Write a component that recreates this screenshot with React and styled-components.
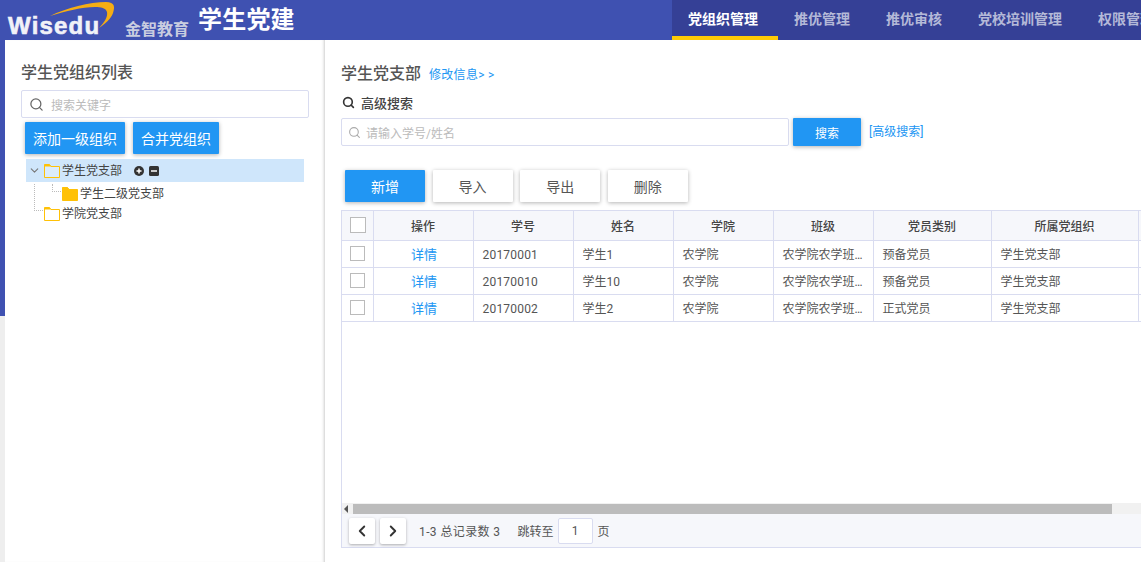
import React from 'react';
import styled, { createGlobalStyle } from 'styled-components';
import { Search, ChevronDown, ChevronLeft, ChevronRight } from 'lucide-react';

const GlobalStyle = createGlobalStyle`
    html, body {
        margin: 0;
        height: 100%;
        overflow: hidden;
        background: #fff;
    }
    body {
        font-family: Roboto, "Noto Sans CJK SC", sans-serif;
        font-size: 12px;
        color: #555;
    }
    * { box-sizing: border-box; }
`;

const Page = styled.div`
    width: 1141px;
    height: 562px;
    overflow: hidden;
    display: flex;
    flex-direction: column;
`;

const Header = styled.header`
    height: 40px;
    flex: none;
    display: flex;
    background: #3f51b1;
`;

const LogoBox = styled.div`
    position: relative;
    width: 125px;
    flex: none;
`;

const LogoText = styled.span`
    position: absolute;
    left: 8px;
    top: 11px;
    font-family: "Liberation Sans", sans-serif;
    font-weight: 700;
    font-size: 24px;
    line-height: 30px;
    letter-spacing: 1.2px;
    color: #f1f2f8;
    -webkit-text-stroke: 0.6px #f1f2f8;
`;

const Swoosh = styled.svg`
    position: absolute;
    left: 48px;
    top: 0;
`;

const SubBrand = styled.span`
    margin-top: 20px;
    font-size: 16px;
    line-height: 20px;
    font-weight: 700;
    color: #c9cde0;
    width: 73px;
    flex: none;
`;

const AppName = styled.h1`
    margin: 4px 0 0;
    font-size: 24px;
    line-height: 32px;
    font-weight: 700;
    color: #fff;
    letter-spacing: 0.2px;
`;

const Nav = styled.nav`
    margin-left: auto;
    width: 469px;
    flex: none;
    display: flex;
    overflow: hidden;
    background: #354096;
`;

const NavItem = styled.a`
    flex: none;
    height: 40px;
    padding: 11px 20px 0 16px;
    font-size: 14px;
    line-height: 17px;
    font-weight: 700;
    white-space: nowrap;
    color: ${props => props.active ? '#fff' : '#b4b9d8'};
    border-bottom: 4px solid ${props => props.active ? '#ffcb05' : 'transparent'};
`;

const Body = styled.div`
    flex: 1;
    display: flex;
    min-height: 0;
`;

const Strip = styled.div`
    width: 5px;
    flex: none;
    background: linear-gradient(#3f51b1 276px, #eee 276px);
`;

const Sidebar = styled.aside`
    width: 320px;
    flex: none;
    padding: 20px 0 0 16px;
    background: #fff;
    box-shadow: inset -3px 0 3px -2px #ccc;
`;

const SideTitle = styled.h2`
    margin: 0;
    font-size: 16px;
    line-height: 25px;
    font-weight: 500;
    color: #555;
`;

const SearchBox = styled.div`
    width: ${props => props.width}px;
    height: 28px;
    flex: none;
    display: flex;
    align-items: center;
    gap: ${props => props.gap}px;
    padding-left: ${props => props.inset}px;
    border: 1px solid #d9dcf0;
    border-radius: 2px;
    background: #fff;
    color: #bbb;
    font-size: 12px;
    svg { color: ${props => props.iconColor}; flex: none; }
`;

const SideSearch = styled(SearchBox)`
    margin-top: 5px;
`;

const ButtonRow = styled.div`
    display: flex;
    gap: 8px;
    margin: 4px 0 0 4px;
`;

const Button = styled.button`
    width: ${props => props.width}px;
    height: ${props => props.height}px;
    flex: none;
    padding: 0;
    border: 0;
    border-radius: 1px;
    font-family: inherit;
    font-size: ${props => props.size || 14}px;
    background: ${props => props.plain ? '#fff' : '#2196f3'};
    color: ${props => props.plain ? '#555' : '#fff'};
    box-shadow: 0 1px 4px rgba(0, 0, 0, 0.3);
`;

const Tree = styled.div`
    margin: 5px 0 0 5px;
    width: 278px;
    color: #444;
`;

const TreeRow = styled.div`
    position: relative;
    height: ${props => props.height}px;
    display: flex;
    align-items: center;
    padding-left: ${props => props.indent}px;
    background: ${props => props.selected ? '#cfe6fb' : 'transparent'};
    line-height: 16px;
`;

const Caret = styled(ChevronDown)`
    position: absolute;
    left: 2px;
    top: 5px;
    color: #777;
`;

const Branch = styled.span`
    position: absolute;
    left: ${props => props.left}px;
    top: ${props => props.top}px;
    width: ${props => props.width}px;
    height: ${props => props.height}px;
    border-left: 1px dotted #bbb;
    border-bottom: 1px dotted #bbb;
`;

const FolderSvg = styled.svg`
    flex: none;
    margin-right: 2px;
`;

const Actions = styled.span`
    display: flex;
    gap: 5px;
    margin-left: 12px;
`;

const Folder = ({ open }) => (
    <FolderSvg width="16" height="16" viewBox="0 0 16 16">
        <path
            d="M.5 1.5h5l1.5 2h8.500v11H.5z"
            fill={open === 'filled' ? '#ffc107' : open ? 'rgba(255,255,255,.25)' : '#fff'}
            stroke="#ffc107"
        />
        <path d="M.5 1.5h5l1.500 2H.5z" fill="#ffc107" />
    </FolderSvg>
);

const Main = styled.main`
    flex: 1;
    min-width: 0;
    padding: 19px 0 0 16px;
`;

const TitleRow = styled.div`
    display: flex;
    align-items: center;
    gap: 8px;
    height: 26px;
`;

const MainTitle = styled.h2`
    margin: 0;
    font-size: 16px;
    font-weight: 500;
    color: #555;
`;

const Link = styled.a`
    color: #2196f3;
    font-size: 12px;
    letter-spacing: ${props => props.spread || 0}px;
`;

const EditLink = styled(Link)`
    margin-top: 2px;
`;

const AdvancedLabel = styled.div`
    display: flex;
    align-items: center;
    gap: 6px;
    height: 20px;
    margin: 7px 0 6px 1px;
    font-size: 13px;
    font-weight: 500;
    color: #444;
    svg { color: #333; }
`;

const SearchRow = styled.div`
    display: flex;
    gap: 4px;
`;

const AdvancedLink = styled(Link)`
    margin: 4px 0 0 4px;
`;

const Toolbar = styled.div`
    display: flex;
    gap: 7.6px;
    margin: 24px 0 8px 4px;
`;

const TableBox = styled.div`
    width: 860px;
    height: 338px;
    display: flex;
    flex-direction: column;
    border: 1px solid #d9dcf0;
`;

const TableArea = styled.div`
    flex: 1;
    min-height: 0;
`;

const Table = styled.table`
    table-layout: fixed;
    width: 857px;
    border-collapse: collapse;
`;

const Th = styled.th`
    height: 29px;
    padding: 0;
    font-size: 12px;
    font-weight: 500;
    color: #444;
    background: #f6f7fb;
    border-right: 1px solid #d9dcf0;
    border-bottom: 1px solid #d9dcf0;
`;

const Td = styled.td`
    height: 27px;
    padding: ${props => props.numeric ? '3px' : '0'} 7px 0 9px;
    color: #555;
    white-space: nowrap;
    overflow: hidden;
    text-overflow: ellipsis;
    letter-spacing: ${props => props.numeric ? '0.2px' : '0'};
    text-align: ${props => props.center ? 'center' : 'left'};
    border-right: 1px solid #d9dcf0;
    border-bottom: 1px solid #d9dcf0;
`;

const CheckCell = styled(Td)`
    padding: 0 0 0 8px;
`;

const Check = styled.span`
    display: block;
    width: ${props => props.size}px;
    height: ${props => props.size}px;
    margin-left: ${props => props.inset || 0}px;
    border: 1px solid #bbb;
    background: #fff;
`;

const DetailLink = styled(Link)`
    font-size: 13px;
`;

const ScrollTrack = styled.div`
    height: 11px;
    flex: none;
    display: flex;
    align-items: center;
    background: #f1f1f1;
`;

const ScrollArrow = styled.span`
    width: 0;
    height: 0;
    margin: 0 5px 0 2px;
    border-style: solid;
    border-color: transparent #555 transparent transparent;
    border-width: 4px 4px 4px 0;
`;

const ScrollThumb = styled.span`
    width: 759px;
    height: 10px;
    background: #bcbcbc;
`;

const Pager = styled.div`
    height: 33px;
    flex: none;
    display: flex;
    align-items: center;
    padding-left: 7px;
    background: #f6f7fb;
    color: #555;
`;

const PageButton = styled.button`
    width: 26px;
    height: 26px;
    margin-right: 5px;
    padding: 0;
    display: flex;
    align-items: center;
    justify-content: center;
    border: 0;
    border-radius: 2px;
    background: #fff;
    color: #333;
    box-shadow: 0 1px 3px rgba(0, 0, 0, 0.3);
`;

const PagerText = styled.span`
    margin-left: ${props => props.gap}px;
    letter-spacing: ${props => props.spread || 0}px;
`;

const PageInput = styled.span`
    width: 35px;
    height: 26px;
    margin-left: 4px;
    display: flex;
    align-items: center;
    justify-content: center;
    border: 1px solid #d9dcf0;
    border-radius: 2px;
    background: #fff;
`;

const navItems = ['党组织管理', '推优管理', '推优审核', '党校培训管理', '权限管理'];
const columns = [
    ['操作', 100], ['学号', 100], ['姓名', 100], ['学院', 100],
    ['班级', 100], ['党员类别', 118], ['所属党组织', 147], ['', 61],
];
const rows = [
    ['20170001', '学生1', '预备党员'],
    ['20170010', '学生10', '预备党员'],
    ['20170002', '学生2', '正式党员'],
];

function App() {
    return (
        <Page>
            <GlobalStyle />
            <Header>
                <LogoBox>
                    <LogoText>Wisedu</LogoText>
                    <Swoosh width="70" height="32" viewBox="0 0 70 32">
                        <path d="M2 16C18 8 42 2 58 2c9 0 9 5 7 11-2 6-8 11-14 15 5-5 9-11 8-16-1-4-6-5-12-5C34 7 18 11 2 16z" fill="#f5ad14" />
                    </Swoosh>
                </LogoBox>
                <SubBrand>金智教育</SubBrand>
                <AppName>学生党建</AppName>
                <Nav>
                    {navItems.map((item, i) => (
                        <NavItem key={item} active={i === 0}>{item}</NavItem>
                    ))}
                </Nav>
            </Header>
            <Body>
                <Strip />
                <Sidebar>
                    <SideTitle>学生党组织列表</SideTitle>
                    <SideSearch width={288} inset={7} gap={7} iconColor="#666">
                        <Search size={15} />
                        <span>搜索关键字</span>
                    </SideSearch>
                    <ButtonRow>
                        <Button width={100} height={32}>添加一级组织</Button>
                        <Button width={86} height={32}>合并党组织</Button>
                    </ButtonRow>
                    <Tree>
                        <TreeRow selected height={23} indent={18}>
                            <Caret size={13} />
                            <Folder open />
                            <span>学生党支部</span>
                            <Actions>
                                <svg width="10" height="10" viewBox="0 0 10 10">
                                    <circle cx="5" cy="5" r="5" fill="#333" />
                                    <path d="M2.500 5h5M5 2.500v5" stroke="#fff" strokeWidth="1.500" />
                                </svg>
                                <svg width="10" height="10" viewBox="0 0 10 10">
                                    <rect width="10" height="10" rx="1.500" fill="#333" />
                                    <path d="M2 5h6" stroke="#fff" strokeWidth="1.500" />
                                </svg>
                            </Actions>
                        </TreeRow>
                        <TreeRow height={23} indent={36}>
                            <Branch left={26} top={2} width={9} height={8} />
                            <Folder open="filled" />
                            <span>学生二级党支部</span>
                        </TreeRow>
                        <TreeRow height={17} indent={18}>
                            <Branch left={8} top={-21} width={9} height={27} />
                            <Folder />
                            <span>学院党支部</span>
                        </TreeRow>
                    </Tree>
                </Sidebar>
                <Main>
                    <TitleRow>
                        <MainTitle>学生党支部</MainTitle>
                        <EditLink spread={0.3}>修改信息&gt; &gt;</EditLink>
                    </TitleRow>
                    <AdvancedLabel>
                        <Search size={13} strokeWidth={3} />
                        高级搜索
                    </AdvancedLabel>
                    <SearchRow>
                        <SearchBox width={448} inset={6} gap={5} iconColor="#aaa">
                            <Search size={13} />
                            <span>请输入学号/姓名</span>
                        </SearchBox>
                        <Button width={68} height={28} size={12}>搜索</Button>
                        <AdvancedLink>[高级搜索]</AdvancedLink>
                    </SearchRow>
                    <Toolbar>
                        <Button width={80} height={32}>新增</Button>
                        <Button plain width={80} height={32}>导入</Button>
                        <Button plain width={80} height={32}>导出</Button>
                        <Button plain width={80} height={32}>删除</Button>
                    </Toolbar>
                    <TableBox>
                        <TableArea>
                            <Table>
                                <colgroup>
                                    <col width="31" />
                                    {columns.map(([name, width], i) => <col key={i} width={width} />)}
                                </colgroup>
                                <thead>
                                    <tr>
                                        <Th><Check size={16} inset={8} /></Th>
                                        {columns.map(([name], i) => <Th key={i}>{name}</Th>)}
                                    </tr>
                                </thead>
                                <tbody>
                                    {rows.map(([id, name, kind]) => (
                                        <tr key={id}>
                                            <CheckCell><Check size={15} /></CheckCell>
                                            <Td center><DetailLink>详情</DetailLink></Td>
                                            <Td numeric>{id}</Td>
                                            <Td>{name}</Td>
                                            <Td>农学院</Td>
                                            <Td>农学院农学班级</Td>
                                            <Td>{kind}</Td>
                                            <Td>学生党支部</Td>
                                            <Td />
                                        </tr>
                                    ))}
                                </tbody>
                            </Table>
                        </TableArea>
                        <ScrollTrack>
                            <ScrollArrow />
                            <ScrollThumb />
                        </ScrollTrack>
                        <Pager>
                            <PageButton><ChevronLeft size={18} strokeWidth={2.500} /></PageButton>
                            <PageButton><ChevronRight size={18} strokeWidth={2.500} /></PageButton>
                            <PagerText gap={8} spread={0.4}>1-3 总记录数 3</PagerText>
                            <PagerText gap={17}>跳转至</PagerText>
                            <PageInput>1</PageInput>
                            <PagerText gap={5}>页</PagerText>
                        </Pager>
                    </TableBox>
                </Main>
            </Body>
        </Page>
    );
}

export default App;
